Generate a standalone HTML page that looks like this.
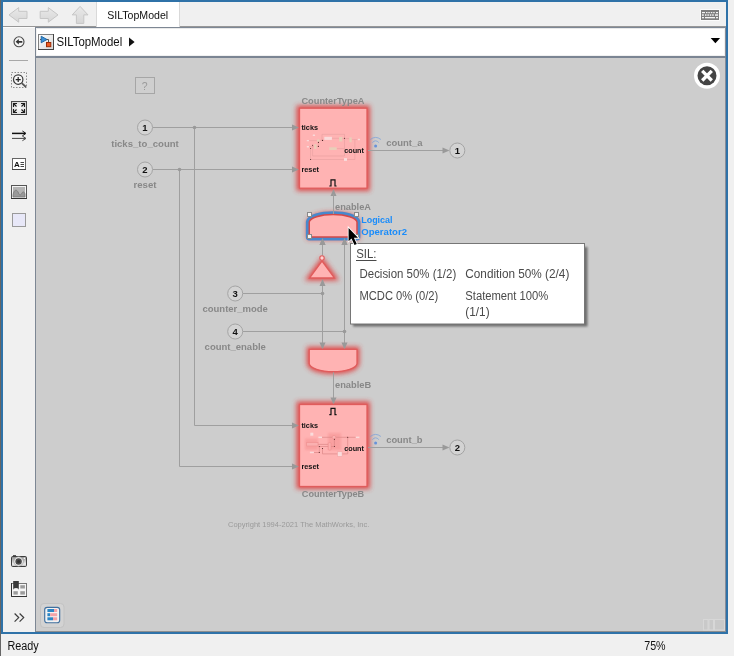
<!DOCTYPE html>
<html><head><meta charset="utf-8"><title>SILTopModel</title>
<style>
html,body{margin:0;padding:0;background:#f0f0f0;overflow:hidden}
svg{display:block;position:absolute;left:0;top:0;will-change:transform}
text{font-family:"Liberation Sans",sans-serif}
.ui{fill:#111}
.lbl{font-weight:bold;fill:#888}
.pl{font-weight:bold;fill:#111}
.ln{stroke:#9f9f9f;stroke-width:1;fill:none}
.ah{fill:#999}
</style></head><body>
<svg width="734" height="656" viewBox="0 0 734 656">
<defs>
<filter id="glow" x="-30%" y="-30%" width="160%" height="160%"><feGaussianBlur stdDeviation="2.6"/></filter>
<filter id="tb" x="-30%" y="-30%" width="160%" height="160%"><feGaussianBlur stdDeviation="1.3"/></filter>
<filter id="sh" x="-10%" y="-10%" width="120%" height="130%"><feGaussianBlur stdDeviation="0.8"/></filter>
<linearGradient id="ag" x1="0" y1="0" x2="0" y2="1"><stop offset="0" stop-color="#e9e9e9"/><stop offset="1" stop-color="#d6d6d6"/></linearGradient>
</defs>
<!-- window chrome -->
<rect x="0" y="0" width="734" height="656" fill="#f0f0f0"/>
<rect x="0" y="0" width="1" height="656" fill="#666"/>
<rect x="1" y="0" width="727" height="634" fill="#2f72a8"/>
<rect x="3" y="2" width="723" height="630" fill="#f0f0f0"/>
<!-- canvas -->
<rect x="36" y="58" width="690" height="574" fill="#cdcdcd"/>

<!-- canvas bottom border -->
<rect x="36" y="631" width="690" height="1" fill="#8e8e8e"/>
<!-- faint widget bottom right -->
<g fill="#c9c9c9" stroke="#d7d7d7" stroke-width="1">
<rect x="703.5" y="619.5" width="4.5" height="10.5"/><rect x="709" y="619.5" width="4.5" height="10.5"/><rect x="714.5" y="619.5" width="10" height="10.5"/>
</g>
<!-- ? box -->
<rect x="135.5" y="77.5" width="19" height="16" fill="#cfcfcf" stroke="#a6a6a6"/>
<text x="144.7" y="90" font-size="10.5" fill="#9a9a9a" text-anchor="middle">?</text>
<!-- glows -->
<g filter="url(#glow)" fill="#e23a3a" stroke="#e23a3a" stroke-width="5" opacity="0.88">
<rect x="299" y="108" width="68.5" height="80.5"/>
<rect x="299" y="404" width="68.5" height="82.5"/>
<path id="and2" d="M309.25 237 V222 A23.9 7.8 0 0 1 357 222 V237 Z"/>
<path d="M322 261 L334.5 278 H309.5 Z"/>
<path d="M309.25 349.3 H357 V363.6 A23.9 8.4 0 0 1 309.25 363.6 Z"/>
</g>
<!-- signal lines -->
<g class="ln">
<path d="M152.5 127.5 H294"/>
<path d="M152.5 169.5 H294"/>
<path d="M194.5 127.5 V425.5 H294"/>
<path d="M179.5 169.5 V466.5 H294"/>
<path d="M368 150.5 H444"/>
<path d="M368 447.5 H444"/>
<path d="M333.5 214 V194"/>
<path d="M322.5 255.5 V243"/>
<path d="M242.5 293.5 H322.5"/>
<path d="M322.5 344 V284"/>
<path d="M242.5 331.5 H344.5"/>
<path d="M344.5 344 V243"/>
<path d="M333.5 372 V399"/>
</g>
<g class="ah">
<path d="M299 127.5 l-7 -3 v6z"/><path d="M299 169.5 l-7 -3 v6z"/>
<path d="M299 425.5 l-7 -3 v6z"/><path d="M299 466.5 l-7 -3 v6z"/>
<path d="M449.5 150.5 l-7 -3 v6z"/><path d="M449.5 447.5 l-7 -3 v6z"/>
<path d="M333.5 189 l-3 7 h6z"/>
<path d="M322.5 238 l-3 7 h6z"/><path d="M344.5 238 l-3 7 h6z"/>
<path d="M322.5 279 l-3 7 h6z"/>
<path d="M322.5 349.5 l-3 -7 h6z"/><path d="M344.5 349.5 l-3 -7 h6z"/>
<path d="M333.5 404.5 l-3 -7 h6z"/>
<circle cx="194.5" cy="127.5" r="1.8"/><circle cx="179.5" cy="169.5" r="1.8"/>
<circle cx="322.5" cy="293.5" r="1.8"/><circle cx="344.5" cy="331.5" r="1.8"/>
</g>
<!-- ports -->
<g fill="#d3d3d3" stroke="#a4a4a4" stroke-width="1">
<circle cx="145" cy="127.5" r="7.5"/><circle cx="145" cy="169.5" r="7.5"/>
<circle cx="235.2" cy="293.5" r="7.5"/><circle cx="235.2" cy="331.5" r="7.5"/>
<circle cx="457.3" cy="150.5" r="7.5"/><circle cx="457.3" cy="447.5" r="7.5"/>
</g>
<g class="pl" font-size="9.5" text-anchor="middle">
<text x="145" y="131">1</text><text x="145" y="173">2</text>
<text x="235.2" y="297">3</text><text x="235.2" y="335">4</text>
<text x="457.3" y="154">1</text><text x="457.3" y="451">2</text>
</g>
<g class="lbl" font-size="9.5">
<text x="111.2" y="146.8" textLength="67.6" lengthAdjust="spacingAndGlyphs">ticks_to_count</text>
<text x="133.5" y="187.9" textLength="23" lengthAdjust="spacingAndGlyphs">reset</text>
<text x="202.5" y="311.6" textLength="65.4" lengthAdjust="spacingAndGlyphs">counter_mode</text>
<text x="204.6" y="349.5" textLength="61.3" lengthAdjust="spacingAndGlyphs">count_enable</text>
<text x="301.4" y="103.9" textLength="63.1" lengthAdjust="spacingAndGlyphs">CounterTypeA</text>
<text x="301.8" y="497.3" textLength="62.4" lengthAdjust="spacingAndGlyphs">CounterTypeB</text>
<text x="386.2" y="145.8" textLength="36.4" lengthAdjust="spacingAndGlyphs">count_a</text>
<text x="386.2" y="442.8" textLength="36.4" lengthAdjust="spacingAndGlyphs">count_b</text>
<text x="335" y="209.7" textLength="36" lengthAdjust="spacingAndGlyphs">enableA</text>
<text x="335" y="387.6" textLength="36.2" lengthAdjust="spacingAndGlyphs">enableB</text>
</g>
<text x="228" y="527" font-size="7.5" fill="#9a9a9a" textLength="141.3" lengthAdjust="spacingAndGlyphs">Copyright 1994-2021 The MathWorks, Inc.</text>
<!-- blocks -->
<g fill="#ffb3b3" stroke="#e05c5c" stroke-width="1.3">
<rect x="299.5" y="108.2" width="67.5" height="80"/>
<rect x="299.5" y="404.5" width="67.5" height="82"/>
<path d="M322 261 L334.5 278 H309.5 Z"/>
<circle cx="322" cy="258" r="2.2" fill="#ffd2d2" stroke-width="1.1"/>
<path d="M309.25 349.3 H357 V363.6 A23.9 8.4 0 0 1 309.25 363.6 Z"/>
</g>
<!-- thumbnails -->
<g fill="none" stroke="#e6a0a0" stroke-width="0.6">
<path d="M322 140.4 V134.3 H344.5 V156 H312.6 V145.3"/>
<path d="M310.6 148.5 V159.5 H354.9 V139.6"/>
<path d="M309 140.6 H317 M319.6 140.4 H324.3 M332 138.3 H339 M342.3 138.6 H349.3 M351.7 139.6 H357.6 M309 146.7 H314.2 M316.5 146.4 H318.4 V142 M336.7 148.6 H344.5"/>
</g>
<g fill="#e9cfb9">
<circle cx="318.3" cy="140.6" r="1.4"/><rect x="314.2" y="144.2" width="2.3" height="4.7"/>
<rect x="339.1" y="137" width="3.2" height="4.5"/><rect x="349.3" y="137.4" width="2.4" height="4.8"/>
<rect x="329.2" y="147.3" width="7.5" height="2.7"/>
</g>
<g fill="#f9dcdc">
<rect x="324.3" y="136.8" width="7.6" height="3.1"/><rect x="344" y="158.1" width="3" height="2.8"/>
<rect x="306.7" y="139.9" width="2.4" height="1.4" rx="0.6"/><rect x="306.7" y="146" width="2.4" height="1.4" rx="0.6"/>
<rect x="312.7" y="134.5" width="2.4" height="1.4" rx="0.6"/><rect x="357.7" y="138.8" width="2.4" height="1.4" rx="0.6"/>
</g>
<g fill="#4a2424">
<circle cx="322.5" cy="140.4" r="0.55"/><circle cx="318.4" cy="142.4" r="0.55"/><circle cx="318.4" cy="146.4" r="0.55"/>
<circle cx="312.6" cy="145.3" r="0.55"/><circle cx="310.6" cy="148.5" r="0.55"/><circle cx="310.6" cy="159.5" r="0.55"/><circle cx="344.5" cy="138.3" r="0.55"/>
</g>
<g filter="url(#tb)" fill="#f58f8f" opacity="0.5">
<rect x="305" y="438.5" width="13" height="11.5"/><rect x="328" y="433" width="13" height="17"/>
</g>
<g fill="none" stroke="#dd8888" stroke-width="0.7">
<path d="M322 437.3 H355.8 M347.7 437.3 V453.9 H322.5 V448.5 M334.4 439 V446.5 H319.3 V452.5 H313.9 M318 444.4 H328.3"/>
</g>
<g fill="#fbb0b0" stroke="#ef8f8f" stroke-width="0.6">
<rect x="306.7" y="442.6" width="11.3" height="3.4"/><rect x="328.3" y="442.6" width="2.7" height="7.5" rx="0.8"/><circle cx="334" cy="437.2" r="1.8"/>
</g>
<g fill="#fadcdc">
<rect x="310.3" y="432.7" width="3" height="3"/><rect x="318.4" y="436.6" width="3.6" height="1.5"/><rect x="355.8" y="436.6" width="3.6" height="1.5"/>
<rect x="309.9" y="451.7" width="4" height="1.5"/><rect x="337.5" y="451.8" width="4.6" height="4.6" stroke="#efa0a0" stroke-width="0.5"/>
</g>
<g fill="#4a2424">
<circle cx="347.7" cy="437.3" r="0.55"/><circle cx="334.4" cy="439.3" r="0.55"/><circle cx="334.4" cy="446.5" r="0.55"/>
<circle cx="319.3" cy="446.5" r="0.55"/><circle cx="319.3" cy="452.5" r="0.55"/><circle cx="322.5" cy="448.5" r="0.55"/>
</g>
<!-- selected logical op -->
<path d="M309.25 237 V222 A23.9 7.8 0 0 1 357 222 V237 Z" fill="none" stroke="#4888cc" stroke-width="6.8" stroke-linejoin="round"/>
<path d="M309.25 237 V222 A23.9 7.8 0 0 1 357 222 V237 Z" fill="#ffb3b3" stroke="#d44848" stroke-width="1.5"/>
<path class="ln" d="M333.5 214 V194"/>
<g class="ah"><path d="M322.5 238 l-3 7 h6z"/><path d="M344.5 238 l-3 7 h6z"/></g>
<g fill="#f4f4f4" stroke="#8a8a8a" stroke-width="1">
<rect x="307.5" y="212.5" width="4" height="4"/><rect x="354.5" y="212.5" width="4" height="4"/>
<rect x="307.5" y="234.5" width="4" height="4"/><rect x="354.5" y="234.5" width="4" height="4"/>
</g>
<g font-weight="bold" fill="#1a8cfa" font-size="9.5">
<text x="361.2" y="222.8" textLength="31.4" lengthAdjust="spacingAndGlyphs">Logical</text>
<text x="361.2" y="234.7" textLength="45.8" lengthAdjust="spacingAndGlyphs">Operator2</text>
</g>
<!-- port labels in blocks -->
<g class="pl" font-size="7.5">
<text x="301.4" y="130" textLength="16.6" lengthAdjust="spacingAndGlyphs">ticks</text>
<text x="301.4" y="171.7" textLength="17.5" lengthAdjust="spacingAndGlyphs">reset</text>
<text x="344.2" y="152.8" textLength="19.8" lengthAdjust="spacingAndGlyphs">count</text>
<text x="301.4" y="427.8" textLength="16.6" lengthAdjust="spacingAndGlyphs">ticks</text>
<text x="301.4" y="468.8" textLength="17.5" lengthAdjust="spacingAndGlyphs">reset</text>
<text x="344.2" y="450.7" textLength="19.8" lengthAdjust="spacingAndGlyphs">count</text>
</g>
<!-- enable symbols -->
<g fill="none" stroke="#111" stroke-width="1.2">
<path d="M329.3 186 H331 V179.8 H335 V186 H336.6"/>
<path d="M329.3 414.6 H331 V408.4 H335 V414.6 H336.6"/>
</g>
<!-- wifi icons -->
<g fill="none" stroke="#6f9bdc" stroke-width="0.9" opacity="0.75">
<path d="M370.3 139.5 Q375.6 135.3 380.9 139.5"/><path d="M372.4 142.6 Q375.6 139 378.8 142.6"/>
<path d="M370.3 436.5 Q375.6 432.3 380.9 436.5"/><path d="M372.4 439.6 Q375.6 436 378.8 439.6"/>
</g>
<circle cx="375.6" cy="145.9" r="1.5" fill="#6792d9"/><circle cx="375.6" cy="442.9" r="1.5" fill="#6792d9"/>
<!-- close button -->
<circle cx="707" cy="75.7" r="13" fill="#fff"/>
<circle cx="707" cy="75.7" r="9.5" fill="#444"/>
<path d="M702.2 70.9 L711.8 80.5 M711.8 70.9 L702.2 80.5" stroke="#fff" stroke-width="3.3" fill="none"/>
<!-- tooltip -->
<rect x="353" y="247" width="234.5" height="79.5" fill="#6e6e6e" filter="url(#sh)"/>
<rect x="350.5" y="243.5" width="234" height="80.5" fill="#fff" stroke="#767676" stroke-width="1"/>
<g fill="#4a4a4a" font-size="12">
<text x="356.2" y="257.5" textLength="20.3" lengthAdjust="spacingAndGlyphs">SIL:</text>
<rect x="356" y="260" width="20.5" height="1" />
<text x="359.5" y="277.6" textLength="96.7" lengthAdjust="spacingAndGlyphs">Decision 50% (1/2)</text>
<text x="465.3" y="277.6" textLength="104" lengthAdjust="spacingAndGlyphs">Condition 50% (2/4)</text>
<text x="359.5" y="299.8" textLength="78.8" lengthAdjust="spacingAndGlyphs">MCDC 0% (0/2)</text>
<text x="465.3" y="299.8" textLength="83" lengthAdjust="spacingAndGlyphs">Statement 100%</text>
<text x="465.3" y="315.8" textLength="24.3" lengthAdjust="spacingAndGlyphs">(1/1)</text>
</g>
<!-- cursor -->
<path d="M348.6 227.9 V241.2 L351.5 238.6 L354.5 245 L356.8 244 L353.9 237.8 H358 Z" fill="#000" stroke="#fff" stroke-width="1.7" stroke-linejoin="miter" paint-order="stroke"/>
<!-- tab bar -->
<rect x="3" y="26" width="723" height="1" fill="#979797"/>
<rect x="96" y="2" width="84" height="25" fill="#d9d9d9"/>
<rect x="97" y="2" width="82" height="25" fill="#fff"/>
<text class="ui" x="107.2" y="18.6" font-size="11" textLength="61" lengthAdjust="spacingAndGlyphs">SILTopModel</text>
<!-- address bar -->
<rect x="36" y="28" width="690" height="28" fill="#fff"/>
<rect x="35" y="27" width="1" height="605" fill="#7d8794"/>
<rect x="35" y="27" width="691" height="1" fill="#7d8794"/>
<rect x="36" y="28" width="690" height="1" fill="#e9e9e9"/>
<rect x="36" y="55" width="690" height="1" fill="#f1f1f1"/>
<rect x="36" y="28" width="1" height="28" fill="#f1f1f1"/><rect x="724" y="28" width="1" height="28" fill="#f1f1f1"/>
<rect x="725" y="27" width="1" height="605" fill="#878c98"/>
<rect x="35" y="56" width="691" height="2" fill="#7b8593"/>
<text class="ui" x="56.4" y="46" font-size="12" textLength="65.8" lengthAdjust="spacingAndGlyphs">SILTopModel</text>
<path d="M129 37.5 L134.6 42 L129 46.6 Z" fill="#111"/>
<path d="M710.7 38 H720.1 L715.4 43.2 Z" fill="#000"/>

<!-- nav arrows -->
<rect x="3" y="27" width="32" height="1" fill="#fbfbfb"/>
<g fill="url(#ag)" stroke="#c6c6c6" stroke-width="1">
<path d="M9 14.9 L18.7 7.6 V11.3 H27 V18.5 H18.7 V22.2 Z"/>
<path d="M58 14.9 L48.3 7.6 V11.3 H40.2 V18.5 H48.3 V22.2 Z"/>
<path d="M80.1 6.4 L88 14.9 H83.8 V23.4 H76.4 V14.9 H72.2 Z"/>
</g>
<!-- keyboard icon -->
<rect x="700" y="9" width="20" height="12" rx="1" fill="#fbfbfb"/>
<rect x="701" y="10" width="18" height="10" fill="#7e7e7e"/>
<g fill="#f4f4f4">
<rect x="702" y="12" width="3" height="1.2"/><rect x="706" y="12" width="1.5" height="1.2"/><rect x="708.3" y="12" width="1.5" height="1.2"/><rect x="710.8" y="12" width="1.5" height="1.2"/><rect x="713.2" y="12" width="1.5" height="1.2"/><rect x="716" y="12" width="2" height="1.2"/>
<rect x="702" y="14.3" width="1.8" height="1.5"/><rect x="705" y="14.3" width="1.5" height="1.5"/><rect x="707.4" y="14.3" width="1.5" height="1.5"/><rect x="709.8" y="14.3" width="1.5" height="1.5"/><rect x="712.2" y="14.3" width="1.5" height="1.5"/><rect x="715" y="14.3" width="3" height="1.5"/>
<rect x="702" y="17" width="2" height="1.3"/><rect x="705" y="17" width="10" height="1.3"/><rect x="716" y="17" width="2" height="1.3"/>
</g>
<!-- back circle icon -->
<circle cx="19" cy="41.8" r="5" fill="#f4f4f4" stroke="#4a4a4a" stroke-width="1.1"/>
<path d="M15.6 41.8 L18.8 39 V40.9 H22.3 V42.7 H18.8 V44.6 Z" fill="#333"/>
<!-- separator -->
<rect x="9" y="60" width="19" height="1" fill="#a8a8a8"/>
<!-- model icon -->
<linearGradient id="mg" x1="0" y1="0" x2="1" y2="1"><stop offset="0" stop-color="#ffffff"/><stop offset="1" stop-color="#d8d8d8"/></linearGradient>
<rect x="38.5" y="34.5" width="15" height="15" fill="url(#mg)" stroke="#808080"/>
<path d="M38 49.5 H54 M53.5 34 V50" stroke="#444" stroke-width="1" fill="none"/>
<path d="M40 39.5 H41.5 M46.5 39.5 H48.5 V42" stroke="#555" stroke-width="1" fill="none"/>
<path d="M41.2 36.2 L47 39.5 L41.2 42.8 Z" fill="#3d8fd6" stroke="#17619f" stroke-width="0.9"/>
<rect x="46.5" y="42.5" width="4.3" height="4.2" fill="#ee5a1e" stroke="#9c2a04" stroke-width="1"/>
<!-- zoom icon -->
<rect x="11.5" y="72.5" width="15" height="15" fill="none" stroke="#8c8c8c" stroke-width="1" stroke-dasharray="1.5 1.5"/>
<circle cx="18.2" cy="79.6" r="4.7" fill="#f8f8f8" stroke="#3a3a3a" stroke-width="1.2"/>
<path d="M15.7 79.6 H20.7 M18.2 77.1 V82.1" stroke="#222" stroke-width="1.2"/>
<path d="M21.7 83.2 L26 87" stroke="#555" stroke-width="1.8"/>
<!-- fit icon -->
<radialGradient id="fg" cx="0.5" cy="0.5" r="0.7"><stop offset="0" stop-color="#fdfdfd"/><stop offset="1" stop-color="#cfcfcf"/></radialGradient>
<rect x="11.5" y="101.5" width="15" height="13" fill="url(#fg)" stroke="#4d4d4d"/>
<rect x="11" y="114" width="16" height="1" fill="#3a3a3a"/>
<g stroke="#1c1c1c" stroke-width="1.1" fill="none">
<path d="M13.5 107 V103.5 H17 M13.5 103.5 L16.5 106.5"/><path d="M24.5 107 V103.5 H21 M24.5 103.5 L21.5 106.5"/>
<path d="M13.5 109 V112.5 H17 M13.5 112.5 L16.5 109.5"/><path d="M24.5 109 V112.5 H21 M24.5 112.5 L21.5 109.5"/>
</g>
<!-- arrows icon -->
<g fill="none">
<path d="M12 133.4 H25" stroke="#111" stroke-width="1.5"/><path d="M22.4 131 L26 133.4 L22.4 135.8" stroke="#111" stroke-width="1"/>
<path d="M12 138.4 H25" stroke="#444" stroke-width="1"/><path d="M22.4 136.1 L26 138.4 L22.4 140.7" stroke="#444" stroke-width="1"/>
</g>
<!-- text icon -->
<rect x="12.5" y="158.5" width="13" height="11" fill="#fff" stroke="#666"/>
<rect x="12" y="169" width="14" height="1" fill="#444"/>
<text x="14" y="167.3" font-size="8" font-weight="bold" fill="#111">A</text>
<path d="M20.5 162.5 H24 M20.5 164.5 H24 M20.5 166.5 H24" stroke="#444" stroke-width="1"/>
<!-- image icon -->
<rect x="11.5" y="185.5" width="15" height="13" fill="#f4f4f4" stroke="#555"/>
<rect x="11" y="198" width="16" height="1" fill="#333"/>
<rect x="13" y="187" width="12" height="10" fill="#b4b4b4"/>
<path d="M13 195 C14 189 17 189 18.5 193 C19.5 196 21 195 22 193 C23 191 24.5 192 25 194 V197 H13 Z" fill="#999" stroke="#777" stroke-width="0.8"/>
<!-- area icon -->
<rect x="12.5" y="213.5" width="13" height="13" fill="#e8e8f8" stroke="#9a9a9a"/>
<!-- camera icon -->
<linearGradient id="cg" x1="0" y1="0" x2="0" y2="1"><stop offset="0" stop-color="#8a8a8a"/><stop offset="0.75" stop-color="#eeeeee"/><stop offset="1" stop-color="#bbbbbb"/></linearGradient>
<rect x="13" y="555" width="3" height="1.5" fill="#555"/>
<rect x="11.5" y="556.5" width="15" height="10" rx="1.2" fill="url(#cg)" stroke="#3c3c3c"/>
<circle cx="18.6" cy="561.5" r="4.7" fill="#f2f2f2" stroke="#8a8a8a" stroke-width="0.6"/>
<circle cx="18.6" cy="561.5" r="3.2" fill="#4c4c4c"/>
<circle cx="18.6" cy="561.5" r="1.5" fill="#333"/>
<rect x="23.7" y="557.6" width="1.3" height="1.3" fill="#fff"/>
<!-- library icon -->
<rect x="11.5" y="583.5" width="15" height="13" fill="#f6f6f6" stroke="#777"/>
<path d="M11.5 583 V596.5 H27" stroke="#333" stroke-width="1" fill="none"/>
<rect x="13.2" y="581" width="5.6" height="8.8" fill="#3a3a3a"/>
<path d="M13.2 591 V589.6 A2.8 1.6 0 0 1 18.8 589.6 V591 Z" fill="#f8f8f8"/>
<rect x="20.3" y="585.2" width="4.6" height="3.3" fill="#9c9c9c"/>
<rect x="13.4" y="591.2" width="4.4" height="3.4" fill="#9c9c9c"/>
<rect x="20.3" y="591.2" width="4.6" height="3.4" fill="#9c9c9c"/>
<!-- chevrons -->
<g stroke="#3c3c3c" stroke-width="1.2" fill="none">
<path d="M14.6 613.5 L18.7 617.6 L14.6 621.7"/><path d="M19.6 613.5 L23.7 617.6 L19.6 621.7"/>
</g>
<!-- coverage button -->
<rect x="40.5" y="603.5" width="23.5" height="24" rx="3.5" fill="#d3d3d3" stroke="#c3c3c3"/>
<rect x="44.7" y="607.3" width="15" height="15.4" rx="2.5" fill="#f2f2f2" stroke="#41709f" stroke-width="1.15"/>
<rect x="47.4" y="609" width="6.6" height="3" fill="#2b86c5"/><rect x="54" y="609" width="3.2" height="3" fill="#f3a3a8"/>
<rect x="47.4" y="613.2" width="2.8" height="3" fill="#2b86c5"/><rect x="50.2" y="613.2" width="7" height="3" fill="#f3a3a8"/>
<rect x="47.4" y="617.3" width="5.6" height="3" fill="#2b86c5"/><rect x="53" y="617.3" width="4.2" height="3" fill="#f3a3a8"/>
<!-- status -->
<text class="ui" x="7.4" y="650.2" font-size="12" textLength="31.3" lengthAdjust="spacingAndGlyphs">Ready</text>
<text class="ui" x="644.2" y="650.2" font-size="12" textLength="21.4" lengthAdjust="spacingAndGlyphs">75%</text>
</svg>
</body></html>
